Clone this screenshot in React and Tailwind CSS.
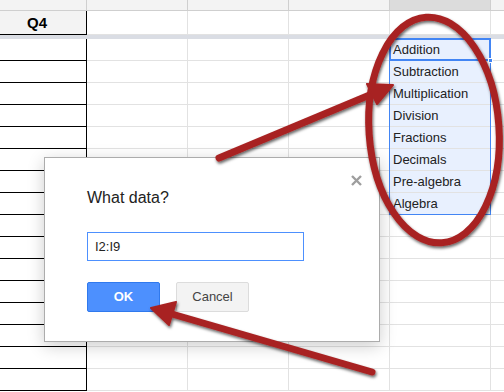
const topics = ["Addition", "Subtraction", "Multiplication", "Division", "Fractions", "Decimals", "Pre-algebra", "Algebra"];

function Row({ value, selected }) {
  return (
    <div className="flex h-[22px]">
      <div className="w-[87px] shrink-0 border-r border-b border-black" />
      <div className="w-[101px] shrink-0 border-r border-b border-[#e2e2e2]" />
      <div className="w-[101px] shrink-0 border-r border-b border-[#e2e2e2]" />
      <div className="w-[101px] shrink-0 border-r border-b border-[#e2e2e2]" />
      <div className={"w-[101px] shrink-0 border-r border-b border-[#e2e2e2] pl-[3px] pt-[1px] text-[13px] leading-[20px] text-[#222] " + (selected ? "bg-[#e8f0fe]" : "")}>
        {value}
      </div>
      <div className="flex-1 border-b border-[#e2e2e2]" />
    </div>
  );
}

function Arrow({ from, base, tip, wings }) {
  return (
    <g>
      <line x1={from[0]} y1={from[1]} x2={base[0]} y2={base[1]} stroke="#a82323" strokeWidth="7" strokeLinecap="round" />
      <polygon points={`${tip[0]},${tip[1]} ${wings[0][0]},${wings[0][1]} ${wings[1][0]},${wings[1][1]}`} fill="#a82323" stroke="#a82323" strokeWidth="2" strokeLinejoin="round" />
    </g>
  );
}

export default function App() {
  return (
    <div className="relative w-[504px] h-[392px] overflow-hidden bg-white" style={{ fontFamily: '"Liberation Sans", Arial, sans-serif' }}>
      {/* column header strip, mostly scrolled out of view */}
      <div className="flex h-[11px] bg-[#f3f3f3] border-b border-[#cfcfcf]">
        <div className="w-[87px] shrink-0 border-r border-[#cfcfcf]" />
        <div className="w-[101px] shrink-0 border-r border-[#cfcfcf]" />
        <div className="w-[101px] shrink-0 border-r border-[#cfcfcf]" />
        <div className="w-[101px] shrink-0 border-r border-[#cfcfcf]" />
        <div className="w-[101px] shrink-0 border-r border-[#cfcfcf] bg-[#dcdcdc]" />
        <div className="flex-1" />
      </div>

      {/* frozen row */}
      <div className="flex h-[24px]">
        <div className="w-[87px] shrink-0 bg-[#f3f3f3] border-r border-b border-black pl-[27px] text-[15px] font-bold leading-[23px] text-black">Q4</div>
        <div className="w-[101px] shrink-0 border-r border-b border-[#e2e2e2]" />
        <div className="w-[101px] shrink-0 border-r border-b border-[#e2e2e2]" />
        <div className="w-[101px] shrink-0 border-r border-b border-[#e2e2e2]" />
        <div className="w-[101px] shrink-0 border-r border-b border-[#e2e2e2]" />
        <div className="flex-1 border-b border-[#e2e2e2]" />
      </div>
      <div className="h-[4px] bg-[#dadde4]" />

      {Array.from({ length: 16 }).map((_, i) => (
        <Row key={i} value={topics[i] || ""} selected={i < topics.length} />
      ))}

      {/* selection range + active cell */}
      <div className="absolute left-[389px] top-[38px] w-[102px] h-[177px] border border-[#4285f4]" />
      <div className="absolute left-[389px] top-[38px] w-[102px] h-[23px] border-2 border-[#4285f4]" />
      <div className="absolute left-[488px] top-[58px] w-[5px] h-[5px] bg-[#4285f4] border border-white" />

      {/* dialog */}
      <div className="absolute left-[44px] top-[157px] w-[336px] h-[185px] bg-white border border-[#acacac] shadow-[0_4px_16px_rgba(0,0,0,0.2)] pl-[42px] pt-[30px]">
        <button className="absolute right-[17px] top-[17px] w-[11px] h-[11px]">
          <svg viewBox="0 0 11 11" width="11" height="11">
            <path d="M1 1 L10 10 M10 1 L1 10" stroke="#9e9e9e" strokeWidth="2.4" />
          </svg>
        </button>
        <div className="text-[16px] leading-[20px] text-[#222]">What data?</div>
        <div className="mt-[24px] w-[217px] h-[29px] border border-[#4d90fe] pl-[7px] text-[13px] leading-[27px] text-[#222]">I2:I9</div>
        <div className="mt-[21px] flex gap-[16px]">
          <div className="w-[73px] h-[30px] rounded-[2px] bg-[#4d90fe] border border-[#3079ed] text-white text-[13px] font-bold flex items-center justify-center">OK</div>
          <div className="w-[73px] h-[30px] rounded-[2px] bg-[#f3f3f3] border border-[#dcdcdc] text-[#444] text-[13px] flex items-center justify-center">Cancel</div>
        </div>
      </div>

      {/* annotations */}
      <svg className="absolute left-0 top-0 pointer-events-none" width="504" height="392" viewBox="0 0 504 392">
        <defs>
          <filter id="sh" x="-20%" y="-20%" width="140%" height="140%">
            <feDropShadow dx="1" dy="2" stdDeviation="1.6" floodColor="#000" floodOpacity="0.6" />
          </filter>
        </defs>
        <g filter="url(#sh)">
          <ellipse cx="434" cy="130" rx="65" ry="113" transform="rotate(-4 434 130)" fill="none" stroke="#a82323" strokeWidth="7" />
          <Arrow from={[219, 158]} base={[372, 94]} tip={[393, 85]} wings={[[377, 104], [367, 84]]} />
          <Arrow from={[372, 372]} base={[172, 314]} tip={[151, 308]} wings={[[169, 325], [176, 302]]} />
        </g>
      </svg>
    </div>
  );
}
